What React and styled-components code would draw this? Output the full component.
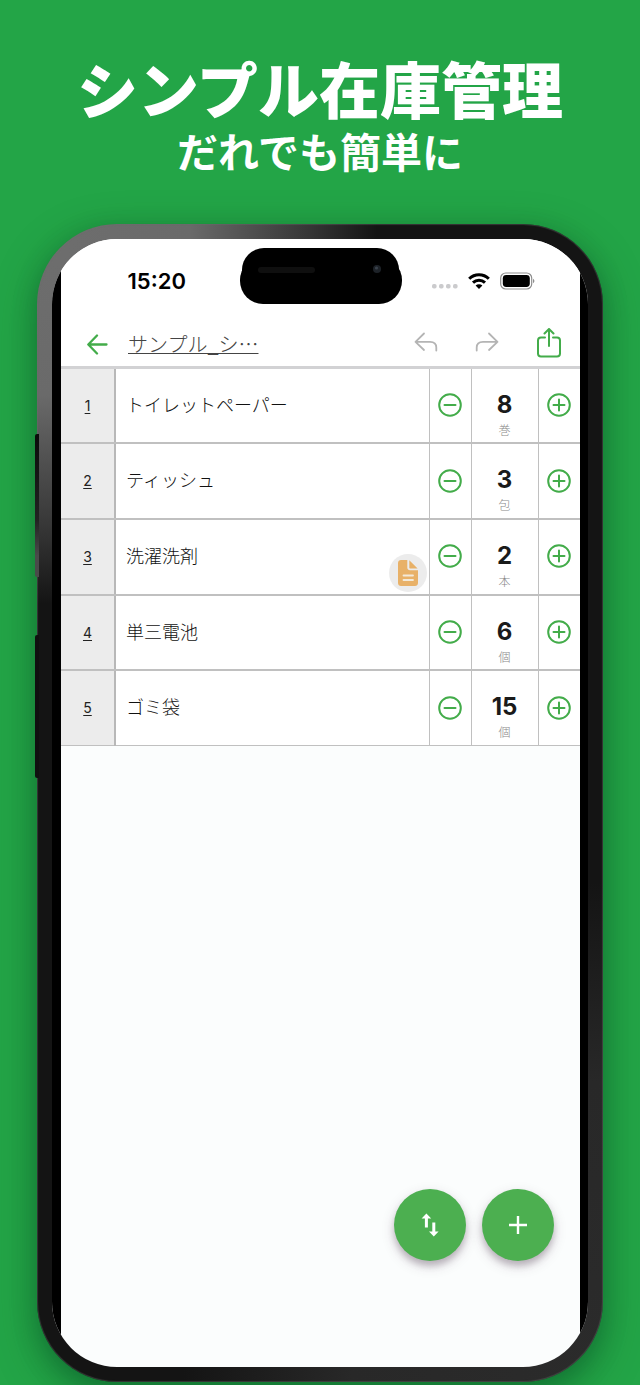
import { useState } from "react";
import styled, { createGlobalStyle } from "styled-components";

const GlobalStyle = createGlobalStyle`
  * {
    box-sizing: border-box;
  }
  body {
    margin: 0;
    background: #23a547;
    font-family: Inter, "Noto Sans CJK JP", sans-serif;
  }
  button {
    padding: 0;
    border: 0;
    background: none;
    cursor: pointer;
    font: inherit;
  }
  svg {
    display: block;
  }
`;

const Page = styled.main`
  min-height: 100vh;
  padding: 50px 37px 3px;
  display: flex;
  flex-direction: column;
  background: #23a547;
  overflow: hidden;
`;

const Hero = styled.header`
  color: #fff;
  text-align: center;
  font-family: "Noto Sans CJK JP", sans-serif;
  font-weight: 700;
  margin-bottom: 50px;
`;

const HeroTitle = styled.h1`
  margin: 0;
  font-size: 61px;
  line-height: 76px;
  font-weight: 900;
`;

const HeroSubtitle = styled.p`
  margin: 0;
  font-size: 41px;
  line-height: 48px;
`;

const Phone = styled.section`
  position: relative;
  flex: 1;
  display: flex;
  padding: 15px;
  border-radius: 80px;
  background:
    radial-gradient(
      ellipse 340px 380px at 0 0,
      #6e6e6e 0,
      #6a6a6a 45%,
      #363636 80%,
      rgba(20, 20, 20, 0) 100%
    ),
    radial-gradient(
      ellipse 420px 500px at 100% 100%,
      #2b2b2b 0,
      #282828 60%,
      rgba(20, 20, 20, 0) 100%
    ),
    #141414;
  box-shadow:
    inset 0 0 1px 1px rgba(110, 110, 110, 0.4),
    0 8px 24px rgba(0, 60, 30, 0.25),
    0 14px 44px rgba(0, 60, 30, 0.35);
`;

const SideButton = styled.span`
  position: absolute;
  left: -2px;
  top: ${({ $top }) => $top}px;
  width: 4px;
  height: 143px;
  border-radius: 2px 0 0 2px;
  background: ${({ $fade }) =>
    $fade ? "linear-gradient(#0a0a0a, #222 60%, #4a4a4a 85%)" : "#101010"};
`;

const Bezel = styled.div`
  flex: 1;
  display: flex;
  min-width: 0;
  border-radius: 65px;
  background: #000;
  overflow: hidden;
`;

/* the side borders show as black strips, the corners are cut by the bezel */
const Screen = styled.div`
  flex: 1;
  min-width: 0;
  display: flex;
  flex-direction: column;
  border: solid #000;
  border-width: 0 8px 0 9px;
  background: #fbfdfd;
`;

const StatusBar = styled.div`
  display: grid;
  grid-template-columns: 1fr 162px 1fr;
  align-items: center;
  height: 84px;
  background: #fff;
`;

const Time = styled.time`
  padding-left: 13px;
  text-align: center;
  font-size: 22px;
  line-height: 28px;
  font-weight: 600;
  color: #000;
`;

const Island = styled.div`
  align-self: start;
  padding-top: 9px;
`;

const StatusIcons = styled.div`
  display: flex;
  justify-content: center;
  align-items: center;
  gap: 10px;
  padding-right: 15px;
`;

const Toolbar = styled.nav`
  display: flex;
  align-items: center;
  height: 46px;
  padding: 0 18px 1px 25px;
  background: #fff;
  border-bottom: 3px solid #d2d2d4;
`;

const SheetName = styled.a`
  margin: 0 auto 0 20px;
  font-family: "Noto Sans CJK JP", sans-serif;
  font-size: 20px;
  line-height: 28px;
  font-weight: 300;
  color: #444;
  text-decoration: underline;
  text-decoration-thickness: 1px;
  text-decoration-skip-ink: none;
  text-underline-offset: 1px;
`;

const Tools = styled.div`
  display: flex;
  align-items: center;
  gap: 37px;
`;

const Items = styled.table`
  width: 100%;
  height: 377px;
  table-layout: fixed;
  border-collapse: collapse;
  background: #fff;
`;

const Cell = styled.td`
  position: relative;
  width: ${({ $width }) => $width};
  padding: 0 0 1px;
  border: 1px solid #c0c0c0;
  border-width: 2px 1px;
  text-align: center;
  &:last-child {
    border-right: 0;
  }
  tr:first-child & {
    border-top: 0;
  }
  tr:last-child & {
    border-bottom-width: 1px;
  }
  button {
    margin: 0 auto;
    display: block;
  }
`;

const IndexCell = styled(Cell).attrs({ as: "th", scope: "row" })`
  border-left: 0;
  border-right: 2px solid #b8b8b8;
  background: #ececec;
  a {
    font-size: 14px;
    line-height: 20px;
    font-weight: 400;
    color: #222;
    text-underline-offset: 2px;
  }
`;

const NameCell = styled(Cell)`
  padding: 0 0 4px 10px;
  text-align: left;
  font-family: "Noto Sans CJK JP", sans-serif;
  font-size: 18px;
  line-height: 26px;
  font-weight: 300;
  color: #111;
`;

const CountCell = styled(Cell)`
  padding-top: 17px;
`;

const Count = styled.div`
  font-size: 24px;
  line-height: 28px;
  font-weight: 700;
  color: #1a1a1a;
`;

const Unit = styled.div`
  margin-top: 4px;
  font-family: "Noto Sans CJK JP", sans-serif;
  font-size: 12px;
  line-height: 14px;
  font-weight: 300;
  color: #888;
`;

const NoteBadge = styled.button`
  && {
    position: absolute;
    right: 2px;
    bottom: 2px;
    width: 38px;
    height: 38px;
    display: grid;
    place-items: center;
    border-radius: 50%;
    background: #ececec;
  }
`;

const Actions = styled.div`
  margin-top: auto;
  padding: 24px 26px 106px;
  display: flex;
  justify-content: flex-end;
  gap: 16px;
`;

const Fab = styled.button`
  width: 72px;
  height: 72px;
  display: grid;
  place-items: center;
  border-radius: 50%;
  && {
    background: #4caf50;
  }
  box-shadow:
    0 5px 6px rgba(60, 40, 60, 0.25),
    0 5px 14px rgba(60, 30, 60, 0.16);
`;

const GREEN = "#43ac4a";
const GRAY = "#b4b4b4";

const line = {
  fill: "none",
  strokeLinecap: "round",
  strokeLinejoin: "round",
};

function BackIcon() {
  return (
    <svg width='22' height='22' {...line} stroke={GREEN} strokeWidth='2.3'>
      <path d='M11 2.5 L2.3 11.5 L11 20.5 M2.5 11.5 H20.5' />
    </svg>
  );
}

function UndoIcon({ flip }) {
  return (
    <svg width='24' height='24' {...line} stroke={GRAY} strokeWidth='1.8'>
      <path
        transform={flip ? "translate(24 0) scale(-1 1)" : undefined}
        d='M10 1.5 L1.5 9.8 L10 18 M1.5 9.8 H16 C20.5 9.8 22.3 12 22.3 15.5 V18.5'
      />
    </svg>
  );
}

function ShareIcon() {
  return (
    <svg width='26' height='32' {...line} stroke={GREEN} strokeWidth='2'>
      <path d='M9 9.5 H5 C3.3 9.5 2 10.8 2 12.5 V25.5 C2 27.2 3.3 28.5 5 28.5 H21 C22.7 28.5 24 27.2 24 25.5 V12.5 C24 10.8 22.7 9.5 21 9.5 H17' />
      <path d='M13 18 V1.5 M8.5 5.5 L13 1 L17.5 5.5' />
    </svg>
  );
}

function StepIcon({ plus }) {
  return (
    <svg width='26' height='26' {...line} stroke={GREEN} strokeWidth='2'>
      <circle cx='13' cy='13' r='10.8' />
      <path d={plus ? "M7.5 13 H18.5 M13 7.5 V18.5" : "M7.5 13 H18.5"} />
    </svg>
  );
}

function NoteIcon() {
  return (
    <svg width='20' height='26'>
      <path
        d='M3 0 H9.3 V7.5 C9.3 9.2 10.5 10.3 12 10.3 H20 V23 C20 24.7 18.7 26 17 26 H3 C1.3 26 0 24.7 0 23 V3 C0 1.3 1.3 0 3 0 Z M11.3 0.3 L19.6 8.6 H12.3 C11.7 8.6 11.3 8.2 11.3 7.6 Z'
        fill='#e8b168'
      />
      <path d='M5.5 15.5 H15 M5.5 20 H15' {...line} stroke='#f3ead9' strokeWidth='1.8' />
    </svg>
  );
}

function IslandShape() {
  return (
    <svg width='162' height='56'>
      <rect x='2' width='157' height='46' rx='22' />
      <rect y='9' width='162' height='47' rx='23' />
      <rect x='18' y='19' width='57' height='6' rx='3' fill='#0f0f0f' />
      <circle cx='137' cy='21' r='4' fill='#1d2228' />
      <circle cx='136.5' cy='20' r='1.6' fill='#3a424c' />
    </svg>
  );
}

function SignalDots() {
  return (
    <svg width='26' height='16' fill='#cbcbcd'>
      <rect x='0' y='11' width='4.6' height='4.6' rx='1.8' />
      <rect x='7' y='11' width='4.6' height='4.6' rx='1.8' />
      <rect x='14' y='11' width='4.6' height='4.6' rx='1.8' />
      <rect x='21' y='11' width='4.6' height='4.6' rx='1.8' />
    </svg>
  );
}

function WifiIcon() {
  return (
    <svg width='22' height='16' fill='none' stroke='#000' strokeWidth='3'>
      <path d='M1.2 5.8 C6.6 0.4 15.4 0.4 20.8 5.8' />
      <path d='M5 9.7 C8.4 6.4 13.6 6.4 17 9.7' />
      <path d='M11 16 L7.6 12.5 C9.5 10.8 12.5 10.8 14.4 12.5 Z' fill='#000' stroke='none' />
    </svg>
  );
}

function BatteryIcon() {
  return (
    <svg width='35' height='18'>
      <rect x='0.7' y='1' width='31' height='16' rx='5' fill='none' stroke='#8e8e8e' strokeWidth='1.2' />
      <rect x='2.8' y='3' width='27' height='12' rx='3.4' />
      <path d='M33 6.8 C34.9 7.6 34.9 10.4 33 11.2 Z' fill='#8e8e8e' />
    </svg>
  );
}

function SwapIcon() {
  return (
    <svg width='24' height='24' fill='#fff'>
      <path d='M8.4 0.5 L13.2 5.4 H9.9 V14.5 H6.9 V5.4 H3.6 Z' />
      <path d='M15.8 23.5 L11 18.6 H14.3 V9.5 H17.3 V18.6 H20.6 Z' />
    </svg>
  );
}

function AddIcon() {
  return (
    <svg width='24' height='24' stroke='#fff' strokeWidth='2.4'>
      <path d='M3 12 H21 M12 3 V21' />
    </svg>
  );
}

const stock = [
  { name: "トイレットペーパー", count: 8, unit: "巻" },
  { name: "ティッシュ", count: 3, unit: "包" },
  { name: "洗濯洗剤", count: 2, unit: "本", note: true },
  { name: "単三電池", count: 6, unit: "個" },
  { name: "ゴミ袋", count: 15, unit: "個" },
];

export default function App() {
  const [items, setItems] = useState(stock);

  const step = (index, by) =>
    setItems(
      items.map((item, i) =>
        i === index ? { ...item, count: Math.max(0, item.count + by) } : item
      )
    );

  return (
    <Page lang='ja'>
      <GlobalStyle />
      <Hero>
        <HeroTitle>シンプル在庫管理</HeroTitle>
        <HeroSubtitle>だれでも簡単に</HeroSubtitle>
      </Hero>

      <Phone>
        <SideButton $top={210} $fade />
        <SideButton $top={411} />
        <Bezel>
          <Screen>
            <StatusBar>
              <Time>15:20</Time>
              <Island>
                <IslandShape />
              </Island>
              <StatusIcons>
                <SignalDots />
                <WifiIcon />
                <BatteryIcon />
              </StatusIcons>
            </StatusBar>

            <Toolbar>
              <button aria-label='戻る'>
                <BackIcon />
              </button>
              <SheetName href='#sheet'>サンプル_シ…</SheetName>
              <Tools>
                <button aria-label='元に戻す'>
                  <UndoIcon />
                </button>
                <button aria-label='やり直す'>
                  <UndoIcon flip />
                </button>
                <button aria-label='共有'>
                  <ShareIcon />
                </button>
              </Tools>
            </Toolbar>

            <Items>
              <tbody>
                {items.map((item, i) => (
                  <tr key={item.name}>
                    <IndexCell $width='54px'>
                      <a href={`#item-${i + 1}`}>{i + 1}</a>
                    </IndexCell>
                    <NameCell>
                      {item.name}
                      {item.note && (
                        <NoteBadge aria-label='メモ'>
                          <NoteIcon />
                        </NoteBadge>
                      )}
                    </NameCell>
                    <Cell $width='42px'>
                      <button aria-label='減らす' onClick={() => step(i, -1)}>
                        <StepIcon />
                      </button>
                    </Cell>
                    <CountCell $width='67px'>
                      <Count>{item.count}</Count>
                      <Unit>{item.unit}</Unit>
                    </CountCell>
                    <Cell $width='42px'>
                      <button aria-label='増やす' onClick={() => step(i, 1)}>
                        <StepIcon plus />
                      </button>
                    </Cell>
                  </tr>
                ))}
              </tbody>
            </Items>

            <Actions>
              <Fab aria-label='並べ替え'>
                <SwapIcon />
              </Fab>
              <Fab aria-label='追加'>
                <AddIcon />
              </Fab>
            </Actions>
          </Screen>
        </Bezel>
      </Phone>
    </Page>
  );
}
